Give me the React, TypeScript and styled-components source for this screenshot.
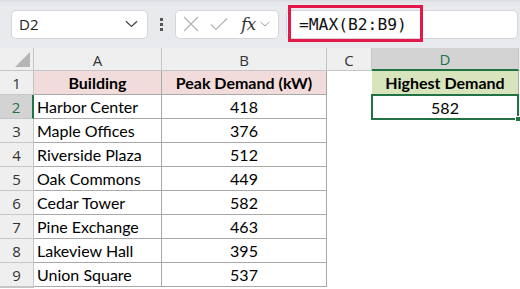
import React from "react";
import styled, { createGlobalStyle } from "styled-components";

const Global = createGlobalStyle`
  html, body { margin: 0; padding: 0; background: #ffffff; }
  body { width: 520px; height: 289px; overflow: hidden; }
  * { box-sizing: border-box; }
`;

const Page = styled.div`
  width: 520px;
  height: 289px;
  display: flex;
  flex-direction: column;
  background: #ffffff;
  overflow: hidden;
`;

const Toolbar = styled.div`
  height: 48px;
  flex: none;
  display: flex;
  align-items: center;
  padding-left: 11px;
  background: linear-gradient(#dcdde1 0px, #e6e7eb 3px, #e9eaee 6px);
`;

const NameBox = styled.div`
  width: 137px;
  height: 29px;
  background: #ffffff;
  border: 1px solid #d6d6da;
  border-radius: 5px;
  display: flex;
  align-items: center;
  justify-content: space-between;
  padding: 0 9px 0 7px;
  font-family: "Open Sans", "Noto Sans", sans-serif;
  font-size: 15px;
  color: #222;
`;

const Dots = styled.div`
  width: 27px;
  display: flex;
  flex-direction: column;
  align-items: center;
  gap: 2px;
  span {
    width: 3px;
    height: 3px;
    background: #555;
  }
`;

const FxBox = styled.div`
  width: 104px;
  height: 29px;
  background: #ffffff;
  border: 1px solid #d6d6da;
  border-radius: 5px;
  display: flex;
  align-items: center;
  padding-left: 7px;
  gap: 0;
`;

const FxText = styled.span`
  font-family: "DejaVu Serif", "Liberation Serif", serif;
  font-style: italic;
  font-size: 17px;
  color: #333;
  margin-left: 13px;
  letter-spacing: -0.5px;
`;

const FormulaBar = styled.div`
  position: relative;
  margin-left: 7px;
  width: 232px;
  height: 29px;
  background: #ffffff;
  border: 1px solid #d6d6da;
  border-radius: 5px;
  display: flex;
  align-items: center;
  padding-left: 12px;
  font-family: "DejaVu Sans Mono", "Liberation Mono", monospace;
  font-size: 16.3px;
  color: #111;
`;

const Highlight = styled.div`
  position: absolute;
  left: 1px;
  top: -6px;
  width: 135px;
  height: 37px;
  border: 3px solid #e3194b;
  pointer-events: none;
`;

const Grid = styled.div`
  display: grid;
  grid-template-columns: 34px 128px 165px 45px 147px 1fr;
  grid-template-rows: 23px repeat(9, 24px) 1fr;
  font-family: "Lato", "Noto Sans", sans-serif;
`;

const ColHead = styled.div<{ $sel?: boolean; $corner?: boolean }>`
  background: ${(p) => (p.$sel ? "#d3d3d3" : "#efefef")};
  border-right: 1px solid #c6c6c6;
  border-bottom: ${(p) => (p.$sel ? "2px solid #217346" : "1px solid #c6c6c6")};
  display: flex;
  align-items: center;
  justify-content: center;
  font-family: "Open Sans", "Noto Sans", sans-serif;
  font-size: 15px;
  color: ${(p) => (p.$sel ? "#217346" : "#333")};
  position: relative;
  padding-top: 1px;
`;

const Corner = styled.div`
  width: 0;
  height: 0;
  border-left: 15px solid transparent;
  border-bottom: 15px solid #b5b5b5;
  position: absolute;
  right: 3px;
  bottom: 3px;
`;

const RowHead = styled.div<{ $sel?: boolean }>`
  background: ${(p) => (p.$sel ? "#d3d3d3" : "#efefef")};
  border-right: ${(p) => (p.$sel ? "2px solid #217346" : "1px solid #c6c6c6")};
  border-bottom: 1px solid #c6c6c6;
  display: flex;
  align-items: center;
  justify-content: center;
  font-family: "Open Sans", "Noto Sans", sans-serif;
  font-size: 15px;
  color: ${(p) => (p.$sel ? "#217346" : "#333")};
`;

const Cell = styled.div<{
  $bg?: string;
  $bold?: boolean;
  $align?: "left" | "center";
  $border?: boolean;
}>`
  background: ${(p) => p.$bg || "#ffffff"};
  border-right: ${(p) => (p.$border ? "1px solid #a9a9a9" : "none")};
  border-bottom: ${(p) => (p.$border ? "1px solid #a9a9a9" : "none")};
  display: flex;
  align-items: center;
  justify-content: ${(p) => (p.$align === "center" ? "center" : "flex-start")};
  padding-left: ${(p) => (p.$align === "center" ? "0" : "3px")};
  font-size: 16px;
  font-weight: ${(p) => (p.$bold ? 700 : 400)};
  color: #000;
  white-space: nowrap;
  overflow: visible;
`;

const SelectedCell = styled.div`
  position: relative;
  margin: -1px 0 -1px -1px;
  border: 2px solid #217346;
  display: flex;
  align-items: center;
  justify-content: center;
  font-size: 16px;
  color: #000;
  background: #fff;
  z-index: 1;
`;

const Handle = styled.div`
  position: absolute;
  right: -4px;
  bottom: -4px;
  width: 6px;
  height: 6px;
  background: #217346;
  border: 1px solid #fff;
`;

const data: [string, number][] = [
  ["Harbor Center", 418],
  ["Maple Offices", 376],
  ["Riverside Plaza", 512],
  ["Oak Commons", 449],
  ["Cedar Tower", 582],
  ["Pine Exchange", 463],
  ["Lakeview Hall", 395],
  ["Union Square", 537],
];

const Chevron = ({ size = 14, color = "#444" }: { size?: number; color?: string }) => (
  <svg width={size} height={size * 0.6} viewBox="0 0 14 8" fill="none">
    <path d="M1 1.2 L7 6.8 L13 1.2" stroke={color} strokeWidth="1.3" />
  </svg>
);

export default function App() {
  return (
    <Page>
      <Global />
      <Toolbar>
        <NameBox>
          <span>D2</span>
          <Chevron size={13} color="#444" />
        </NameBox>
        <Dots>
          <span />
          <span />
          <span />
        </Dots>
        <FxBox>
          <svg width="16" height="16" viewBox="0 0 16 16">
            <path d="M1 1 L15 15 M15 1 L1 15" stroke="#b3b3b3" strokeWidth="1.2" />
          </svg>
          <svg width="18" height="14" viewBox="0 0 18 14" style={{ marginLeft: 11 }}>
            <path d="M1 7.5 L6 12.5 L17 1.5" stroke="#b3b3b3" strokeWidth="1.2" fill="none" />
          </svg>
          <FxText>fx</FxText>
          <span style={{ marginLeft: 4, display: "flex" }}>
            <Chevron size={10} color="#999" />
          </span>
        </FxBox>
        <FormulaBar>
          =MAX(B2:B9)
          <Highlight />
        </FormulaBar>
      </Toolbar>
      <Grid>
        <ColHead>
          <Corner />
        </ColHead>
        <ColHead>A</ColHead>
        <ColHead>B</ColHead>
        <ColHead>C</ColHead>
        <ColHead $sel>D</ColHead>
        <ColHead />

        <RowHead>1</RowHead>
        <Cell $border $bold $align="center" $bg="#f2dcdb">
          Building
        </Cell>
        <Cell $border $bold $align="center" $bg="#f2dcdb">
          Peak Demand (kW)
        </Cell>
        <Cell />
        <Cell $border $bold $align="center" $bg="#d8e4bc">
          Highest Demand
        </Cell>
        <Cell />

        {data.map(([name, val], i) => (
          <React.Fragment key={name}>
            <RowHead $sel={i === 0}>{i + 2}</RowHead>
            <Cell $border>{name}</Cell>
            <Cell $border $align="center">
              {val}
            </Cell>
            <Cell />
            {i === 0 ? (
              <SelectedCell>
                582
                <Handle />
              </SelectedCell>
            ) : (
              <Cell />
            )}
            <Cell />
          </React.Fragment>
        ))}
        <RowHead />
      </Grid>
    </Page>
  );
}
